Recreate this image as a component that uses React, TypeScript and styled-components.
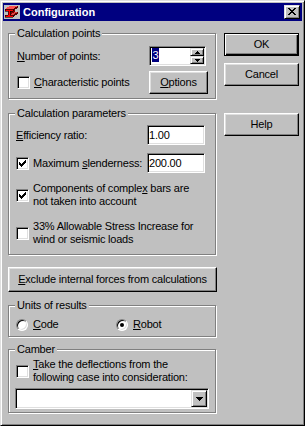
import React, { FC, ReactNode } from 'react'
import styled, { createGlobalStyle, css } from 'styled-components'

const face = '#c0c0c0'

const GlobalStyle = createGlobalStyle`
  html, body {
    margin: 0;
    padding: 0;
    background: ${face};
  }
  body {
    font-family: "Liberation Sans", Arial, sans-serif;
    font-size: 11px;
    line-height: 13px;
    letter-spacing: -0.2px;
    color: #000;
  }
`

const raised = css`
  border: 1px solid;
  border-color: #dfdfdf #000 #000 #dfdfdf;
  box-shadow: inset 1px 1px #fff, inset -1px -1px #808080;
`

const sunken = css`
  border: 1px solid;
  border-color: #808080 #fff #fff #808080;
  box-shadow: inset 1px 1px #000, inset -1px -1px #dfdfdf;
`

const Window = styled.div`
  box-sizing: border-box;
  width: 305px;
  height: 426px;
  padding: 2px;
  background: ${face};
  ${raised}
  display: flex;
  flex-direction: column;
`

const TitleBar = styled.div`
  height: 18px;
  flex: none;
  background: #000080;
  display: flex;
  align-items: center;
  gap: 3px;
  padding: 0 2px 0 1px;
`

const Title = styled.div`
  flex: 1;
  color: #fff;
  font-weight: bold;
  letter-spacing: 0;
`

const CloseButton = styled.div`
  box-sizing: border-box;
  width: 16px;
  height: 14px;
  background: ${face};
  ${raised}
  display: flex;
  align-items: center;
  justify-content: center;
  padding: 0 1px 1px 0;
`

const Body = styled.div`
  display: flex;
  gap: 8px;
  padding: 12px 0 0 5px;
`

const LeftColumn = styled.div`
  width: 208px;
  display: flex;
  flex-direction: column;
`

const RightColumn = styled.div`
  width: 75px;
  display: flex;
  flex-direction: column;
`

const Group = styled.div<{ $mt?: number; $pt: number; $pb: number; $pl?: number }>`
  position: relative;
  box-sizing: border-box;
  margin-top: ${p => p.$mt ?? 0}px;
  padding: ${p => p.$pt}px 6px ${p => p.$pb}px ${p => p.$pl ?? 7}px;
  border: 1px solid #808080;
  box-shadow: inset 1px 1px #fff, 1px 1px #fff;
  display: flex;
  flex-direction: column;
`

const Legend = styled.span`
  position: absolute;
  top: -7px;
  left: 6px;
  padding: 0 2px;
  background: ${face};
`

const Row = styled.div<{ $mt?: number }>`
  display: flex;
  align-items: center;
  margin-top: ${p => p.$mt ?? 0}px;
`

const FieldLabel = styled.div<{ $w?: number }>`
  width: ${p => p.$w ?? 131}px;
  flex: none;
  display: flex;
  align-items: center;
  gap: 4px;
`

const Key = styled.span`
  text-decoration: underline;
  text-underline-offset: 1px;
`

const Button = styled.button<{ $w?: number; $h?: number; $mt?: number; $default?: boolean }>`
  box-sizing: border-box;
  width: ${p => p.$w ?? 75}px;
  height: ${p => p.$h ?? 23}px;
  margin: ${p => p.$mt ?? 0}px 0 0 0;
  padding: 0;
  font: inherit;
  letter-spacing: inherit;
  color: #000;
  background: ${face};
  border: 1px solid;
  border-color: #fff #000 #000 #fff;
  box-shadow: inset -1px -1px #808080, inset 1px 1px #dfdfdf;
  ${p =>
    p.$default &&
    css`
      border-color: #000;
      box-shadow: inset 1px 1px #fff, inset -1px -1px #000, inset -2px -2px #808080;
    `}
`

const TextField = styled.div<{ $w?: number }>`
  box-sizing: border-box;
  width: ${p => p.$w ?? 58}px;
  height: 20px;
  background: #fff;
  ${sunken}
  padding: 0 1px;
  line-height: 18px;
`

const CheckBox = styled.span`
  box-sizing: border-box;
  flex: none;
  width: 13px;
  height: 13px;
  background: #fff;
  ${sunken}
  display: flex;
`

const RadioButton = styled.span`
  box-sizing: border-box;
  flex: none;
  width: 12px;
  height: 12px;
  border-radius: 50%;
  background: #fff;
  ${sunken}
  display: flex;
  align-items: center;
  justify-content: center;
`

const RadioDot = styled.span`
  width: 4px;
  height: 4px;
  border-radius: 50%;
  background: #000;
`

const RadioOption = styled.div<{ $w?: number }>`
  width: ${p => (p.$w ? `${p.$w}px` : 'auto')};
  display: flex;
  align-items: center;
  gap: 5px;
`

const SpinBox = styled.div`
  box-sizing: border-box;
  width: 57px;
  height: 20px;
  padding: 1px;
  background: #fff;
  ${sunken}
  display: flex;
  justify-content: space-between;
`

const Selection = styled.span`
  margin-left: 1px;
  padding: 0 0.5px;
  height: 14px;
  line-height: 14px;
  background: #000080;
  color: #fff;
`

const SpinButtons = styled.div`
  width: 14px;
  display: flex;
  flex-direction: column;
`

const SpinButton = styled.div`
  box-sizing: border-box;
  height: 8px;
  background: ${face};
  ${raised}
  display: flex;
  align-items: center;
  justify-content: center;
`

const Combo = styled.div`
  box-sizing: border-box;
  width: 194px;
  height: 21px;
  margin-left: -1px;
  padding: 1px;
  background: #fff;
  ${sunken}
  display: flex;
  justify-content: flex-end;
`

const DropButton = styled.div`
  box-sizing: border-box;
  width: 16px;
  height: 17px;
  background: ${face};
  ${raised}
  display: flex;
  align-items: center;
  justify-content: center;
`

const Check = () => (
  <svg width="11" height="11" viewBox="0 0 11 11" shapeRendering="crispEdges">
    <path
      d="M8 2h1v1h-1z M7 3h2v1h-2z M2 4h1v1h-1z M6 4h3v1h-3z M2 5h2v1h-2z M5 5h3v1h-3z M2 6h5v1h-5z M3 7h3v1h-3z M4 8h1v1h-1z"
      fill="#000"
    />
  </svg>
)

const CheckItem: FC<{ checked?: boolean; w?: number; children: ReactNode }> = ({ checked, w, children }) => (
  <FieldLabel $w={w}>
    <CheckBox>{checked && <Check />}</CheckBox>
    <span>{children}</span>
  </FieldLabel>
)

const AppIcon = () => (
  <svg width="16" height="16" viewBox="0 0 16 16" shapeRendering="crispEdges">
    <rect x="0" y="1" width="16" height="14" fill="#c0c0c0" />
    <polygon points="9,11 14,8 14,10 9,13" fill="#600000" />
    <polygon points="6,11 11,8 14,8 9,11" fill="#e04040" />
    <polygon points="6,7 11,4 11,8 6,11" fill="#800000" />
    <polygon points="9,5 14,2 14,4 9,7" fill="#600000" />
    <polygon points="1,5 6,2 14,2 9,5" fill="#ff5050" />
    <path d="M1 5h8v2h-3v4h3v2h-8v-2h3v-4h-3z" fill="#ff0000" stroke="#000" strokeWidth="0.6" />
  </svg>
)

const CloseGlyph = () => (
  <svg width="8" height="7" viewBox="0 0 8 7" shapeRendering="crispEdges">
    <path
      d="M0 0h2v1h-2z M6 0h2v1h-2z M1 1h2v1h-2z M5 1h2v1h-2z M2 2h4v1h-4z M3 3h2v1h-2z M2 4h4v1h-4z M1 5h2v1h-2z M5 5h2v1h-2z M0 6h2v1h-2z M6 6h2v1h-2z"
      fill="#000"
    />
  </svg>
)

const SmallArrow: FC<{ up?: boolean }> = ({ up }) => (
  <svg width="5" height="3" viewBox="0 0 5 3" shapeRendering="crispEdges">
    <path d={up ? 'M2 0h1v1h-1z M1 1h3v1h-3z M0 2h5v1h-5z' : 'M0 0h5v1h-5z M1 1h3v1h-3z M2 2h1v1h-1z'} fill="#000" />
  </svg>
)

const DropArrow = () => (
  <svg width="7" height="4" viewBox="0 0 7 4" shapeRendering="crispEdges">
    <path d="M0 0h7v1h-7z M1 1h5v1h-5z M2 2h3v1h-3z M3 3h1v1h-1z" fill="#000" />
  </svg>
)

export default function App() {
  return (
    <>
      <GlobalStyle />
      <Window>
        <TitleBar>
          <AppIcon />
          <Title>Configuration</Title>
          <CloseButton>
            <CloseGlyph />
          </CloseButton>
        </TitleBar>
        <Body>
          <LeftColumn>
            <Group $pt={12} $pb={4} $pl={8}>
              <Legend>Calculation points</Legend>
              <Row>
                <FieldLabel $w={132}>
                  <span>
                    <Key>N</Key>umber of points:
                  </span>
                </FieldLabel>
                <SpinBox>
                  <Selection>3</Selection>
                  <SpinButtons>
                    <SpinButton>
                      <SmallArrow up />
                    </SpinButton>
                    <SpinButton>
                      <SmallArrow />
                    </SpinButton>
                  </SpinButtons>
                </SpinBox>
              </Row>
              <Row $mt={5}>
                <CheckItem w={132}>
                  <Key>C</Key>haracteristic points
                </CheckItem>
                <Button type="button" $w={59}>
                  <Key>O</Key>ptions
                </Button>
              </Row>
            </Group>

            <Group $mt={14} $pt={11} $pb={8}>
              <Legend>Calculation parameters</Legend>
              <Row>
                <FieldLabel>
                  <span>
                    <Key>E</Key>fficiency ratio:
                  </span>
                </FieldLabel>
                <TextField>1.00</TextField>
              </Row>
              <Row $mt={8}>
                <CheckItem checked>
                  Maximum <Key>s</Key>lenderness:
                </CheckItem>
                <TextField>200.00</TextField>
              </Row>
              <Row $mt={9}>
                <CheckItem checked w={190}>
                  Components of comple<Key>x</Key> bars are
                  <br />
                  not taken into account
                </CheckItem>
              </Row>
              <Row $mt={12}>
                <CheckItem w={190}>
                  33% Allowable Stress Increase for
                  <br />
                  wind or seismic loads
                </CheckItem>
              </Row>
            </Group>

            <Button type="button" $w={209} $h={25} $mt={12}>
              <Key>E</Key>xclude internal forces from calculations
            </Button>

            <Group $mt={13} $pt={12} $pb={5}>
              <Legend>Units of results</Legend>
              <Row>
                <RadioOption $w={100}>
                  <RadioButton />
                  <span>
                    <Key>C</Key>ode
                  </span>
                </RadioOption>
                <RadioOption>
                  <RadioButton>
                    <RadioDot />
                  </RadioButton>
                  <span>
                    <Key>R</Key>obot
                  </span>
                </RadioOption>
              </Row>
            </Group>

            <Group $mt={12} $pt={8} $pb={3}>
              <Legend>Camber</Legend>
              <Row>
                <CheckItem w={190}>
                  <Key>T</Key>ake the deflections from the
                  <br />
                  following case into consideration:
                </CheckItem>
              </Row>
              <Row $mt={4}>
                <Combo>
                  <DropButton>
                    <DropArrow />
                  </DropButton>
                </Combo>
              </Row>
            </Group>
          </LeftColumn>

          <RightColumn>
            <Button type="button" $default>
              OK
            </Button>
            <Button type="button" $mt={7}>
              Cancel
            </Button>
            <Button type="button" $mt={27}>
              Help
            </Button>
          </RightColumn>
        </Body>
      </Window>
    </>
  )
}
